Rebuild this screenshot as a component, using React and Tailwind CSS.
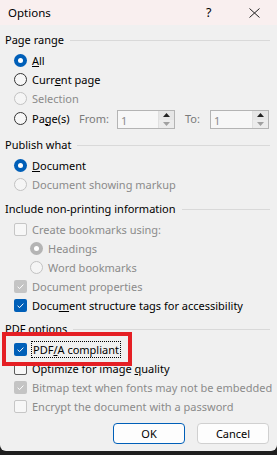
import React from "react";

const font = { fontFamily: '"Noto Sans", "Open Sans", sans-serif' };

function Header({ children }) {
  return (
    <div className="flex items-center h-[18px] pl-[5px] pr-[7px] gap-[6px] text-black">
      <span>{children}</span>
      <div className="flex-1 h-px bg-[#d9d9d9]" />
    </div>
  );
}

function RadioMark({ checked, disabled }) {
  if (checked) {
    return (
      <span
        className={`w-[13px] h-[13px] rounded-full flex items-center justify-center shrink-0 ${
          disabled ? "bg-[#b4b4b4]" : "bg-[#005fb8]"
        }`}
      >
        <span className="w-[5px] h-[5px] rounded-full bg-white" />
      </span>
    );
  }
  return (
    <span
      className={`w-[13px] h-[13px] rounded-full border shrink-0 ${
        disabled ? "border-[#c2c2c2] bg-[#f5f5f5]" : "border-[#333333] bg-[#f7f7f7]"
      }`}
    />
  );
}

function CheckMark({ checked, disabled }) {
  if (checked) {
    return (
      <span
        className={`w-[13px] h-[13px] rounded-[2px] flex items-center justify-center shrink-0 ${
          disabled ? "bg-[#c4c4c4]" : "bg-[#005fb8]"
        }`}
      >
        <svg width="13" height="13" viewBox="0 0 13 13">
          <path d="M3.6 6.8 L5.6 8.6 L9.4 4.6" fill="none" stroke="white" strokeWidth="1" />
        </svg>
      </span>
    );
  }
  return (
    <span
      className={`w-[13px] h-[13px] rounded-[2px] border shrink-0 ${
        disabled ? "border-[#c6c6c6] bg-[#f7f7f7]" : "border-[#5a5a5a] bg-[#f7f7f7]"
      }`}
    />
  );
}

function Row({ type, checked, disabled, indent, children, className = "" }) {
  return (
    <div
      className={`flex items-center h-[19px] gap-[5px] ${indent ? "pl-[30px]" : "pl-[14px]"} ${
        disabled ? "text-[#8b8b8b]" : "text-black"
      } ${className}`}
    >
      {type === "radio" ? (
        <RadioMark checked={checked} disabled={disabled} />
      ) : (
        <CheckMark checked={checked} disabled={disabled} />
      )}
      <span className="whitespace-nowrap">{children}</span>
    </div>
  );
}

function Spin({ className }) {
  return (
    <div className={`flex h-[19px] border border-[#b4b4b4] bg-[#f7f7f7] ${className}`}>
      <div className="flex-1 pl-[3px] pt-[2px] text-[#8b8b8b] leading-[15px]">1</div>
      <div className="w-[16px] flex flex-col border-l border-[#e0e0e0]">
        <div className="flex-1 flex items-center justify-center bg-[#e6e6e6]">
          <svg width="7" height="4" viewBox="0 0 7 4">
            <path d="M0 4 L3.5 0 L7 4 Z" fill="#222" />
          </svg>
        </div>
        <div className="flex-1 flex items-center justify-center bg-[#ececec]">
          <svg width="7" height="4" viewBox="0 0 7 4">
            <path d="M0 0 L3.5 4 L7 0 Z" fill="#a0a0a0" />
          </svg>
        </div>
      </div>
    </div>
  );
}

export default function App() {
  return (
    <div className="w-[277px] h-[455px] bg-[#1f1f1f] text-[11px] leading-[16px]" style={font}>
      <div className="h-[451px] bg-[#f0f0f0] rounded-b-[6px] flex flex-col overflow-hidden">
        {/* Title bar */}
        <div className="h-[25px] bg-[#f9efef] flex items-center pl-[8px] text-black text-[11.5px]">
          <span className="flex-1">Options</span>
          <span className="w-[12px] text-[12.5px]">?</span>
          <span className="w-[31px]" />
          <svg width="11" height="10" viewBox="0 0 11 10" className="mr-[17px]">
            <path d="M0.5 0.5 L10.5 9.5 M10.5 0.5 L0.5 9.5" stroke="#222" strokeWidth="1" />
          </svg>
        </div>

        <div className="flex flex-col pt-[6px]">
          <Header>Page range</Header>
          <div className="mt-[2px]">
            <Row type="radio" checked>
              <span className="underline">A</span>ll
            </Row>
            <Row type="radio">
              Curr<span className="underline">e</span>nt page
            </Row>
            <Row type="radio" disabled>
              Selection
            </Row>
            <div className="flex items-center h-[21px]">
              <Row type="radio" className="w-[79px]">
                Pa<span className="underline">g</span>e(s)
              </Row>
              <span className="text-[#7a7a7a] w-[38px]">From:</span>
              <Spin className="w-[58px] self-end" />
              <span className="text-[#7a7a7a] ml-[10px] w-[25px]">To:</span>
              <Spin className="w-[59px] self-end" />
            </div>
          </div>

          <div className="mt-[7px]">
            <Header>Publish what</Header>
          </div>
          <div className="mt-[2px]">
            <Row type="radio" checked>
              <span className="underline">D</span>ocument
            </Row>
            <Row type="radio" disabled>
              Document showing markup
            </Row>
          </div>

          <div className="mt-[6px]">
            <Header>Include non-printing information</Header>
          </div>
          <div className="mt-[2px]">
            <Row type="check" disabled>
              Create bookmarks using:
            </Row>
            <Row type="radio" checked disabled indent>
              Headings
            </Row>
            <Row type="radio" disabled indent>
              Word bookmarks
            </Row>
            <Row type="check" checked disabled>
              Document properties
            </Row>
            <Row type="check" checked>
              Docu<span className="underline">m</span>ent structure tags for accessibility
            </Row>
          </div>

          <div className="mt-[5px]">
            <Header>PDF options</Header>
          </div>
          <div className="mt-[2px]">
            <div className="relative">
              <Row type="check" checked>
                <span className="outline outline-1 outline-dotted outline-black px-[1px]">
                  PDF<span className="underline">/</span>A compliant
                </span>
              </Row>
              <div className="absolute left-[2px] top-[-8px] w-[130px] h-[34px] border-[4px] border-[#e51f24]" />
            </div>
            <Row type="check">
              Optimize for image <span className="underline">q</span>uality
            </Row>
            <Row type="check" checked disabled>
              Bitmap text when fonts may not be embedded
            </Row>
            <Row type="check" disabled>
              Encrypt the document with a password
            </Row>
          </div>

          <div className="mt-[7px] flex justify-end gap-[12px] pr-[8px]">
            <button className="w-[72px] h-[21px] rounded-[4px] border border-[#005fb8] bg-[#fdfdfd] text-black leading-[19px]">
              OK
            </button>
            <button className="w-[72px] h-[21px] rounded-[4px] border border-[#d0d0d0] bg-[#fdfdfd] text-black leading-[19px]">
              Cancel
            </button>
          </div>
        </div>
      </div>
    </div>
  );
}
